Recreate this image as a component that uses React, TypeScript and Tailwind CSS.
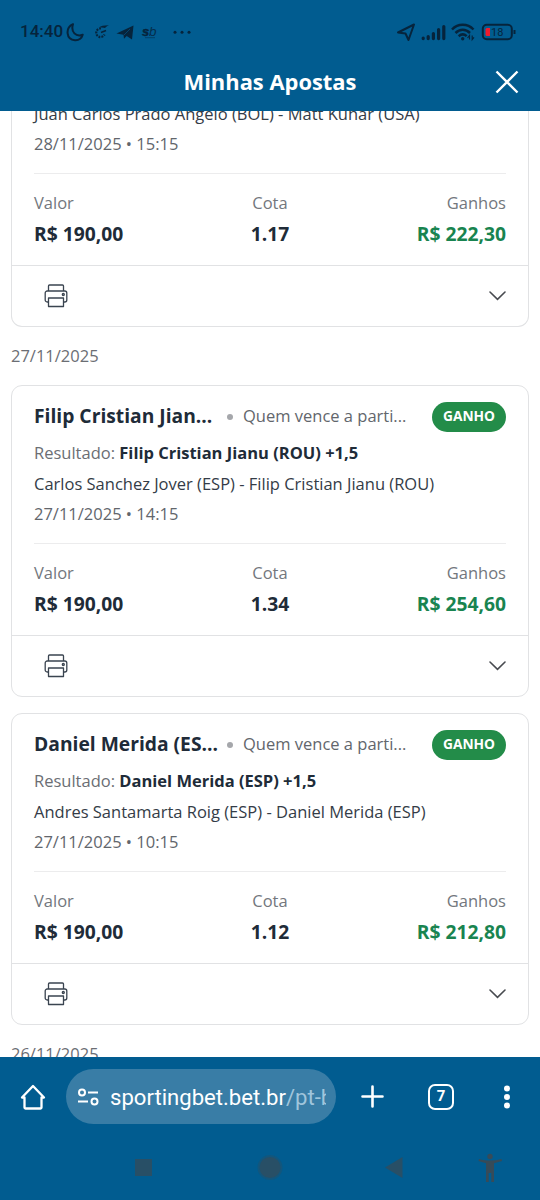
type Bet = {
  title?: string
  market?: string
  selection?: string
  match: string
  date: string
  odds: string
  winnings: string
}

const previousBet: Bet = {
  match: "Juan Carlos Prado Angelo (BOL) - Matt Kuhar (USA)",
  date: "28/11/2025 • 15:15",
  odds: "1.17",
  winnings: "R$ 222,30",
}

const bets: Bet[] = [
  {
    title: "Filip Cristian Jian...",
    market: "Quem vence a parti...",
    selection: "Filip Cristian Jianu (ROU) +1,5",
    match: "Carlos Sanchez Jover (ESP) - Filip Cristian Jianu (ROU)",
    date: "27/11/2025 • 14:15",
    odds: "1.34",
    winnings: "R$ 254,60",
  },
  {
    title: "Daniel Merida (ES...",
    market: "Quem vence a parti...",
    selection: "Daniel Merida (ESP) +1,5",
    match: "Andres Santamarta Roig (ESP) - Daniel Merida (ESP)",
    date: "27/11/2025 • 10:15",
    odds: "1.12",
    winnings: "R$ 212,80",
  },
]

function PrinterIcon() {
  return (
    <svg width="24" height="24" viewBox="0 0 24 24" fill="none" stroke="#3a4450" strokeWidth="1.3" strokeLinejoin="round">
      <path d="M4.5 7V2a1 1 0 0 1 1-1h13a1 1 0 0 1 1 1v5" />
      <path d="M4.5 18H3.2A2 2 0 0 1 1.2 16V9a2 2 0 0 1 2-2h17.6a2 2 0 0 1 2 2v7a2 2 0 0 1-2 2h-1.3" />
      <path d="M4.5 14h15v8.5h-15z" />
      <circle cx="19.3" cy="10.5" r="1" />
    </svg>
  )
}

function BetCard({ bet }: { bet: Bet }) {
  return (
    <div
      className={
        bet.title
          ? "rounded-[11px] border border-[#e1e2e4] bg-white"
          : "rounded-b-[11px] border border-t-0 border-[#e1e2e4] bg-white"
      }
    >
      <div className="px-[22px]">
        {bet.title && (
          <>
            <div className="flex h-[47px] items-center pt-4">
              <span className="-mt-[3px] w-[179px] text-[19.25px] leading-[30px] font-bold whitespace-nowrap text-[#202b38]">
                {bet.title}
              </span>
              <span className="-mt-px ml-[14px] size-[6px] rounded-full bg-[#a5a7ab]" />
              <span className="-mt-[3px] ml-[10px] text-[16.5px] whitespace-nowrap text-[#62666c]">{bet.market}</span>
              <span className="-mt-[2px] ml-auto flex h-[30px] w-[74px] items-center justify-center rounded-full bg-[#238c49] text-[13.75px] font-bold text-white">
                GANHO
              </span>
            </div>
            <p className="mt-[5px] mb-px text-[16.5px] leading-[30px] whitespace-nowrap text-[#6b6e74]">
              Resultado: <span className="font-bold text-[#202b38]">{bet.selection}</span>
            </p>
          </>
        )}
        <p className="text-[16.5px] leading-[30px] whitespace-nowrap text-[#343c47]">{bet.match}</p>
        <p className="text-[16.5px] leading-[30px] text-[#62666c]">{bet.date}</p>
        <div className="mt-[14px] border-t border-[#ececed]" />
        <div className="mt-[14px] grid grid-cols-3 pb-[16px] leading-[30px]">
          <div>
            <p className="text-[16.5px] text-[#73777d]">Valor</p>
            <p className="mt-px text-[19.25px] font-bold text-[#202b38]">R$ 190,00</p>
          </div>
          <div className="text-center">
            <p className="text-[16.5px] text-[#73777d]">Cota</p>
            <p className="mt-px text-[19.25px] font-bold text-[#202b38]">{bet.odds}</p>
          </div>
          <div className="text-right">
            <p className="text-[16.5px] text-[#73777d]">Ganhos</p>
            <p className="mt-px text-[19.25px] font-bold text-[#198450]">{bet.winnings}</p>
          </div>
        </div>
      </div>
      <div className="flex h-[61px] items-center justify-between border-t border-[#e1e2e4] pr-[22px] pl-[32px]">
        <PrinterIcon />
        <svg width="17" height="10" viewBox="0 0 17 10" fill="none" stroke="#484b50" strokeWidth="1.6" strokeLinecap="round">
          <path d="M1 1l7.5 7.3L16 1" />
        </svg>
      </div>
    </div>
  )
}

function StatusBar() {
  return (
    <div className="flex h-[64px] items-center pl-[20px] pr-[23px] text-[#06243c]">
      <span className="w-[46px] font-[Roboto,sans-serif] text-[17px] font-medium">14:40</span>
      <svg width="130" height="24" viewBox="0 0 130 24" fill="none" stroke="currentColor">
        <path d="M7 4.2C-1 8 0 19.5 9 20.2c4 .2 6.8-2.3 7.7-5.4C10 17.3 4.5 12 7 4.2Z" strokeWidth="2" strokeLinejoin="round" />
        <path d="M35 8.5a4.3 4.3 0 1 0 3.5 6" strokeWidth="2.2" strokeDasharray="1.8 1.1" />
        <path d="M33 7.5c2-1.5 5-2.3 10-2.2-2 .6-3 1.5-4 2.8-2-.5-3-.2-6-.6Z" fill="currentColor" stroke="none" />
        <path d="M35 12.5l5-2" strokeWidth="1.5" />
        <path d="M50.5 13.5 67.5 5.5 66 19.5l-5.3-3.5-2.7 2.8-.5-4Z" fill="currentColor" stroke="none" />
        <path d="M58 15l6-6" stroke="#015c90" strokeWidth=".6" />
        <text x="76" y="15.5" fontFamily="Liberation Sans, sans-serif" fontSize="13" fontWeight="bold" fontStyle="italic" fill="currentColor" strokeWidth=".4">s</text>
        <text x="83" y="15.5" fontFamily="Liberation Sans, sans-serif" fontSize="13.5" fontStyle="italic" fill="currentColor" stroke="none" opacity=".8">b</text>
        <path d="M79 17.7h10" strokeWidth=".8" opacity=".6" />
        <g fill="currentColor" stroke="none">
          <circle cx="109" cy="12.3" r="1.5" />
          <circle cx="116" cy="12.3" r="1.5" />
          <circle cx="123" cy="12.3" r="1.5" />
        </g>
      </svg>
      <svg className="ml-auto" width="121" height="24" viewBox="0 0 121 24" fill="none" stroke="currentColor">
        <path d="M2 12.5 18 4.5 12.5 20 9.5 13.5Z" strokeWidth="2" strokeLinejoin="round" />
        <g strokeWidth="3.2" strokeLinecap="round">
          <path d="M27.2 18v.6M32.2 16.5v2.1M37.4 13.5v5.1M42.6 9.5v9.1M47.8 6.5v12.1" />
        </g>
        <g strokeWidth="2.5">
          <path d="M56 9.5c6-6.2 15.5-6.2 21.5 0" />
          <path d="M59.5 13c4.3-4.2 10.2-4.2 14.5 0" />
          <path d="M62.7 16.2c2.5-2.2 5.6-2.2 8 0" />
        </g>
        <circle cx="66.7" cy="18.7" r="1.7" fill="currentColor" stroke="none" />
        <path d="M73.500 19.500v-4l-2 2.500M76.200 15.500v4l1.800-2.200" strokeWidth="1.200" />
        <rect x="86.8" y="4.8" width="29" height="14.4" rx="4" strokeWidth="2" />
        <path d="M118.5 10v4" strokeWidth="2" />
        <path d="M91 8h3v8h-3a1.500 1.500 0 0 1-1.500-1.500v-5A1.500 1.500 0 0 1 91 8Z" fill="#ef1b2d" stroke="none" />
        <text x="95" y="16" fontFamily="Roboto, sans-serif" fontSize="11" fill="currentColor" stroke="none">18</text>
      </svg>
    </div>
  )
}

function BrowserBar() {
  return (
    <div className="flex h-[79px] items-center text-white">
      <svg className="ml-[20px]" width="26" height="26" viewBox="0 0 26 26" fill="none" stroke="currentColor" strokeWidth="2.3" strokeLinejoin="round" strokeLinecap="round">
        <path d="M2 13.5 13 2l11 11.5h-2.5v10a1 1 0 0 1-1 1h-15a1 1 0 0 1-1-1v-10Z" />
      </svg>
      <div className="ml-[20px] flex h-[55px] w-[270px] items-center rounded-full bg-[#397da6] pl-[11px]">
        <svg width="22" height="18" viewBox="0 0 22 18" fill="none" stroke="currentColor" strokeWidth="2">
          <circle cx="5" cy="4.5" r="3" />
          <path d="M11 4.5h10M1 13.5h10" />
          <circle cx="17.5" cy="13.5" r="3" />
        </svg>
        <span className="ml-[11px] w-[216px] overflow-hidden font-[Roboto,sans-serif] text-[22.1px] leading-[32px] whitespace-nowrap">
          sportingbet.bet.br<span className="text-[#a0c5dc]">/pt-b</span>
        </span>
      </div>
      <svg className="ml-[25px]" width="23" height="23" viewBox="0 0 23 23" stroke="currentColor" strokeWidth="2.6" strokeLinecap="round">
        <path d="M11.5 1.5v20M1.5 11.5h20" />
      </svg>
      <div className="ml-[44px] flex size-[26px] items-center justify-center rounded-[7px] border-[2.5px] border-white font-[Roboto,sans-serif] text-[15px] font-bold">
        7
      </div>
      <svg className="ml-[49px]" width="8" height="24" viewBox="0 0 8 24" fill="currentColor">
        <circle cx="4" cy="3.5" r="3" />
        <circle cx="4" cy="12" r="3" />
        <circle cx="4" cy="20.5" r="3" />
      </svg>
    </div>
  )
}

function SystemNav() {
  return (
    <svg width="540" height="64" viewBox="0 0 540 64" fill="#284f66">
      <path d="M135 23h17v17h-17z" />
      <circle cx="270" cy="31.5" r="12.5" opacity=".45" />
      <circle cx="270" cy="31.5" r="10.5" />
      <path d="M385 31.5 402.5 21v21Z" />
      <g fill="#374b58">
        <circle cx="490" cy="20.5" r="2.7" />
        <path d="M478.5 25 479 23c7 2 15 2 22.500 0l.5 2-8 2.300V46h-2.700v-9h-2.600v9H486V27.300Z" />
      </g>
    </svg>
  )
}

export default function App() {
  return (
    <div className="flex h-[1200px] w-[540px] flex-col overflow-hidden bg-white font-['Open_Sans',sans-serif]">
      <header className="h-[111px] shrink-0 bg-[#015c90]">
        <StatusBar />
        <div className="flex h-[36px] items-center pr-[21px] pl-[45px]">
          <h1 className="flex-1 text-center text-[21.9px] font-bold text-white">Minhas Apostas</h1>
          <svg width="24" height="24" viewBox="0 0 24 24" stroke="white" strokeWidth="2.4">
            <path d="M1.5 1.5l21 21M22.5 1.5l-21 21" />
          </svg>
        </div>
      </header>
      <main className="h-[946px] shrink-0 overflow-hidden px-[11px]">
        {/* first card is scrolled partly under the header */}
        <div className="-mt-[12px]">
          <BetCard bet={previousBet} />
        </div>
        <p className="h-[58px] text-[16.5px] leading-[58px] text-[#6b6e74]">27/11/2025</p>
        <div className="flex flex-col gap-4">
          {bets.map((bet) => (
            <BetCard key={bet.match} bet={bet} />
          ))}
        </div>
        <p className="text-[16.5px] leading-[58px] text-[#6b6e74]">26/11/2025</p>
      </main>
      <footer className="h-[143px] shrink-0 bg-[#015c90]">
        <BrowserBar />
        <SystemNav />
      </footer>
    </div>
  )
}
